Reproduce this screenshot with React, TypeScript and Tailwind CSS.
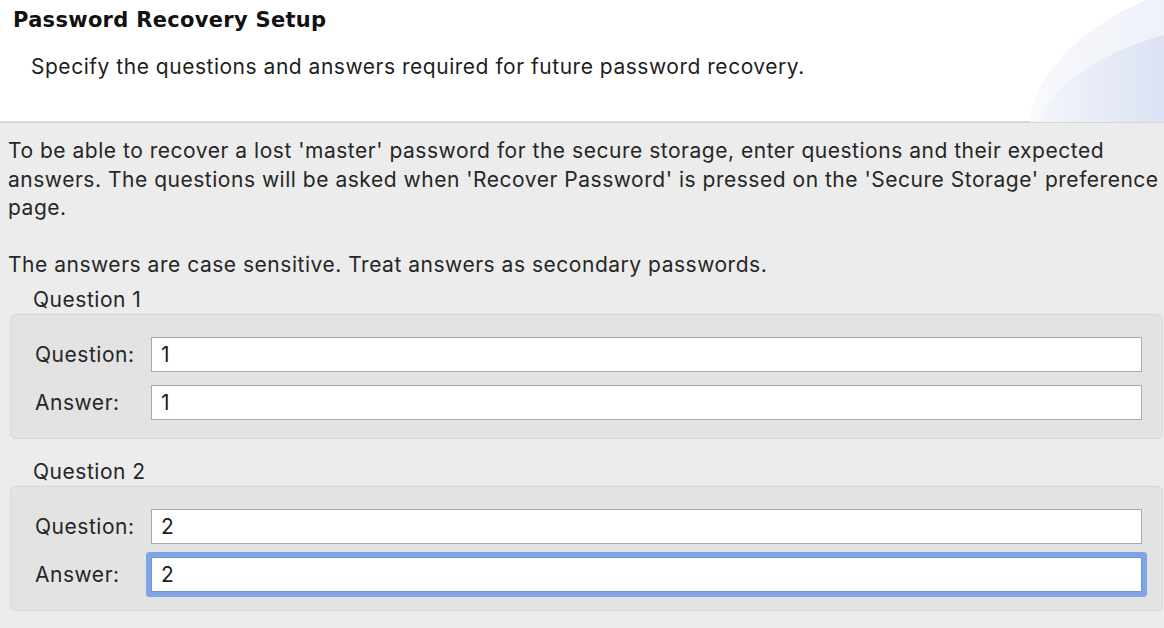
import React from 'react';

// Password recovery wizard page: header banner + two question groups
interface IQuestionGroup {
    title: string;
    question: string;
    answer: string;
    focusAnswer?: boolean;
}

const groups: IQuestionGroup[] = [
    { title: 'Question 1', question: '1', answer: '1' },
    { title: 'Question 2', question: '2', answer: '2', focusAnswer: true },
];

const BannerArt: React.FC = () => (
    <svg className="absolute right-0 top-0" width="140" height="122" viewBox="0 0 140 122">
        <defs>
            <linearGradient id="outerFade" x1="0" y1="0" x2="1" y2="0">
                <stop offset="0" stopColor="#f8f9fc" />
                <stop offset="1" stopColor="#eef1f9" />
            </linearGradient>
            <linearGradient id="innerFade" x1="0" y1="0" x2="1" y2="0">
                <stop offset="0" stopColor="#f3f5fb" />
                <stop offset="1" stopColor="#dce2f3" />
            </linearGradient>
        </defs>
        <path d="M6 122 C6 84, 52 28, 123 0 L140 0 L140 122 Z" fill="url(#outerFade)" />
        <path d="M140 35 C92 48, 30 78, 14 122 L140 122 Z" fill="url(#innerFade)" />
    </svg>
);

const Field: React.FC<{ label: string; value: string; focused?: boolean }> = ({ label, value, focused }) => (
    <div className="flex items-center">
        <span className="w-[140px] shrink-0 pl-[24px]">{label}</span>
        <div
            className={`flex-1 h-[35px] bg-white flex items-center pl-[9px] text-[#1e1e1e] ${
                focused
                    ? 'border border-[#6f93d6] rounded-[1px] shadow-[0_0_0_5px_#80a4e6]'
                    : 'border border-[#a9a9a9]'
            }`}
        >
            {value}
        </div>
    </div>
);

const App: React.FC = () => {
    return (
        <div className="w-[1164px] h-[628px] overflow-hidden bg-[#ececec] font-['Inter',sans-serif] text-[21px] tracking-[0.52px] text-[#262626]">
            <header className="relative h-[123px] bg-white border-b-2 border-[#d6d6d6]">
                <BannerArt />
                <h1 className="relative pl-[13px] pt-[6px] leading-[28px] text-[21px] tracking-[0.3px] font-bold text-[#111] font-['DejaVu_Sans',sans-serif]">
                    Password Recovery Setup
                </h1>
                <p className="relative pl-[31px] pt-[19px] leading-[28px] text-[#1e1e1e]">
                    Specify the questions and answers required for future password recovery.
                </p>
            </header>

            <main className="pt-[14px] pl-[8px] pr-px">
                <p className="whitespace-nowrap leading-[28.5px]">
                    To be able to recover a lost 'master' password for the secure storage, enter questions and their expected
                    <br />
                    answers. The questions will be asked when 'Recover Password' is pressed on the 'Secure Storage' preference
                    <br />
                    page.
                    <br />
                    <br />
                    The answers are case sensitive. Treat answers as secondary passwords.
                </p>

                <div className="mt-[6.5px] flex flex-col gap-[19px]">
                    {groups.map((g) => (
                        <section key={g.title} className="ml-[2px]">
                            <h2 className="pl-[23px] leading-[28px]">{g.title}</h2>
                            <div className="h-[125px] rounded-[6px] border border-[#d7d7d7] bg-[#e3e3e3] pt-[22px] pr-[20px] flex flex-col gap-[13px]">
                                <Field label="Question:" value={g.question} />
                                <Field label="Answer:" value={g.answer} focused={g.focusAnswer} />
                            </div>
                        </section>
                    ))}
                </div>
            </main>
        </div>
    );
};

export default App;
